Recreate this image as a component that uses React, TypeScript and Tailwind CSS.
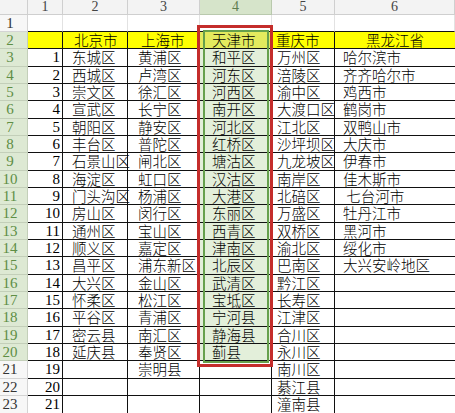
import React from "react";

// rows 3..23 of the sheet: number, 北京, 上海, 天津, 重庆, 黑龙江
const data: string[][] = [
  ["1", "东城区", "黄浦区", "和平区", "万州区", "哈尔滨市"],
  ["2", "西城区", "卢湾区", "河东区", "涪陵区", "齐齐哈尔市"],
  ["3", "崇文区", "徐汇区", "河西区", "渝中区", "鸡西市"],
  ["4", "宣武区", "长宁区", "南开区", "大渡口区", "鹤岗市"],
  ["5", "朝阳区", "静安区", "河北区", "江北区", "双鸭山市"],
  ["6", "丰台区", "普陀区", "红桥区", "沙坪坝区", "大庆市"],
  ["7", "石景山区", "闸北区", "塘沽区", "九龙坡区", "伊春市"],
  ["8", "海淀区", "虹口区", "汉沽区", "南岸区", "佳木斯市"],
  ["9", "门头沟区", "杨浦区", "大港区", "北碚区", " 七台河市"],
  ["10", "房山区", "闵行区", "东丽区", "万盛区", "牡丹江市"],
  ["11", "通州区", "宝山区", "西青区", "双桥区", "黑河市"],
  ["12", "顺义区", "嘉定区", "津南区", "渝北区", "绥化市"],
  ["13", "昌平区", "浦东新区", "北辰区", "巴南区", "大兴安岭地区"],
  ["14", "大兴区", "金山区", "武清区", "黔江区", ""],
  ["15", "怀柔区", "松江区", "宝坻区", "长寿区", ""],
  ["16", "平谷区", "青浦区", "宁河县", "江津区", ""],
  ["17", "密云县", "南汇区", "静海县", "合川区", ""],
  ["18", "延庆县", "奉贤区", "蓟县", "永川区", ""],
  ["19", "", "崇明县", "", "南川区", ""],
  ["20", "", "", "", "綦江县", ""],
  ["21", "", "", "", "潼南县", ""],
];

const cjk = "font-['Noto_Sans_CJK_SC',sans-serif] font-light text-[14.5px] text-black whitespace-pre";
const num = "font-['Liberation_Serif',serif] text-[15px]";
const head = "font-['Liberation_Serif',serif] text-[14px] leading-[13px]";

function RowHead({ n }: { n: number }) {
  const sel = n >= 2 && n <= 20;
  return (
    <div
      className={
        sel
          ? `${num} bg-[#dde9d3] text-[#5e8e45] border-r border-b border-[#c3cfb9] w-full pr-[7px] leading-[16px] text-center`
          : `${num} bg-[#f7f7f7] text-[#333] border-r border-b border-[#d4d4d4] w-full pr-[7px] leading-[16px] text-center`
      }
    >
      {n}
    </div>
  );
}

export default function App() {
  const cols = ["1", "2", "3", "4", "5", "6"];
  return (
    <div className="relative w-[455px] h-[413px] overflow-hidden bg-white">
      <div className="grid grid-cols-[28px_35px_65px_72px_72px_63px_120px] grid-rows-[14.6px_repeat(23,17.35px)]">
        {/* column headers */}
        <div className="bg-[#f3f3f3] border-r border-b border-[#cfcfcf]" />
        {cols.map((c) =>
          c === "4" ? (
            <div key={c} className={`${head} bg-[#d6e4ca] text-[#5f7d50] border-r border-b border-[#b9c9ad] text-center`}>
              {c}
            </div>
          ) : (
            <div key={c} className={`${head} bg-[#f3f3f3] text-[#444] border-r border-b border-[#cfcfcf] text-center`}>
              {c}
            </div>
          )
        )}

        {/* row 1 */}
        <div className="flex"><RowHead n={1} /></div>
        {cols.map((c) => (
          <div key={c} className="border-r border-r-[#e2e2e2] border-b border-b-[#111]" />
        ))}

        {/* row 2: headings */}
        <div className="flex"><RowHead n={2} /></div>
        <div className="bg-[#ffff00] border-r border-b border-[#111]" />
        <div className={`${cjk} bg-[#ffff00] border-r border-b border-[#111] pl-[11px] leading-[16px]`}>北京市</div>
        <div className={`${cjk} bg-[#ffff00] border-r border-b border-[#111] pl-[13px] leading-[16px]`}>上海市</div>
        <div className={`${cjk} bg-[#e3ea5e] border-r border-b border-[#111] pl-[12px] leading-[16px]`}>天津市</div>
        <div className={`${cjk} bg-[#ffff00] border-r border-b border-[#111] pl-[4px] leading-[16px]`}>重庆市</div>
        <div className={`${cjk} bg-[#ffff00] border-b border-[#111] text-center leading-[16px]`}>黑龙江省</div>

        {/* rows 3..23 */}
        {data.map((r, i) => {
          const n = i + 3;
          const green = n <= 20;
          return (
            <React.Fragment key={n}>
              <div className="flex"><RowHead n={n} /></div>
              <div className={`${num} text-black text-right pr-[2px] border-r border-b border-[#111] leading-[16px]`}>{r[0]}</div>
              <div className={`${cjk} border-r border-b border-[#111] pl-[9px] leading-[16px]`}>{r[1]}</div>
              <div className={`${cjk} border-r border-b border-[#111] pl-[10px] leading-[16px]`}>{r[2]}</div>
              <div className={green ? `${cjk} bg-[#e3efda] border-r border-b border-[#111] pl-[12px] leading-[16px]` : `${cjk} border-r border-b border-[#111] pl-[12px] leading-[16px]`}>{r[3]}</div>
              <div className={`${cjk} border-r border-b border-[#111] pl-[5px] leading-[16px]`}>{r[4]}</div>
              <div className={`${cjk} border-b border-[#111] pl-[8px] leading-[16px]`}>{r[5]}</div>
            </React.Fragment>
          );
        })}
      </div>

      {/* selection border and the red marker drawn over the sheet */}
      <div className="absolute left-[203px] top-[30px] w-[66px] h-[333px] border-2 border-[#66a04c] pointer-events-none" />
      <div className="absolute left-[197px] top-[25px] w-[76px] h-[342px] border-[3px] border-[#c42d2b] pointer-events-none" />
    </div>
  );
}
